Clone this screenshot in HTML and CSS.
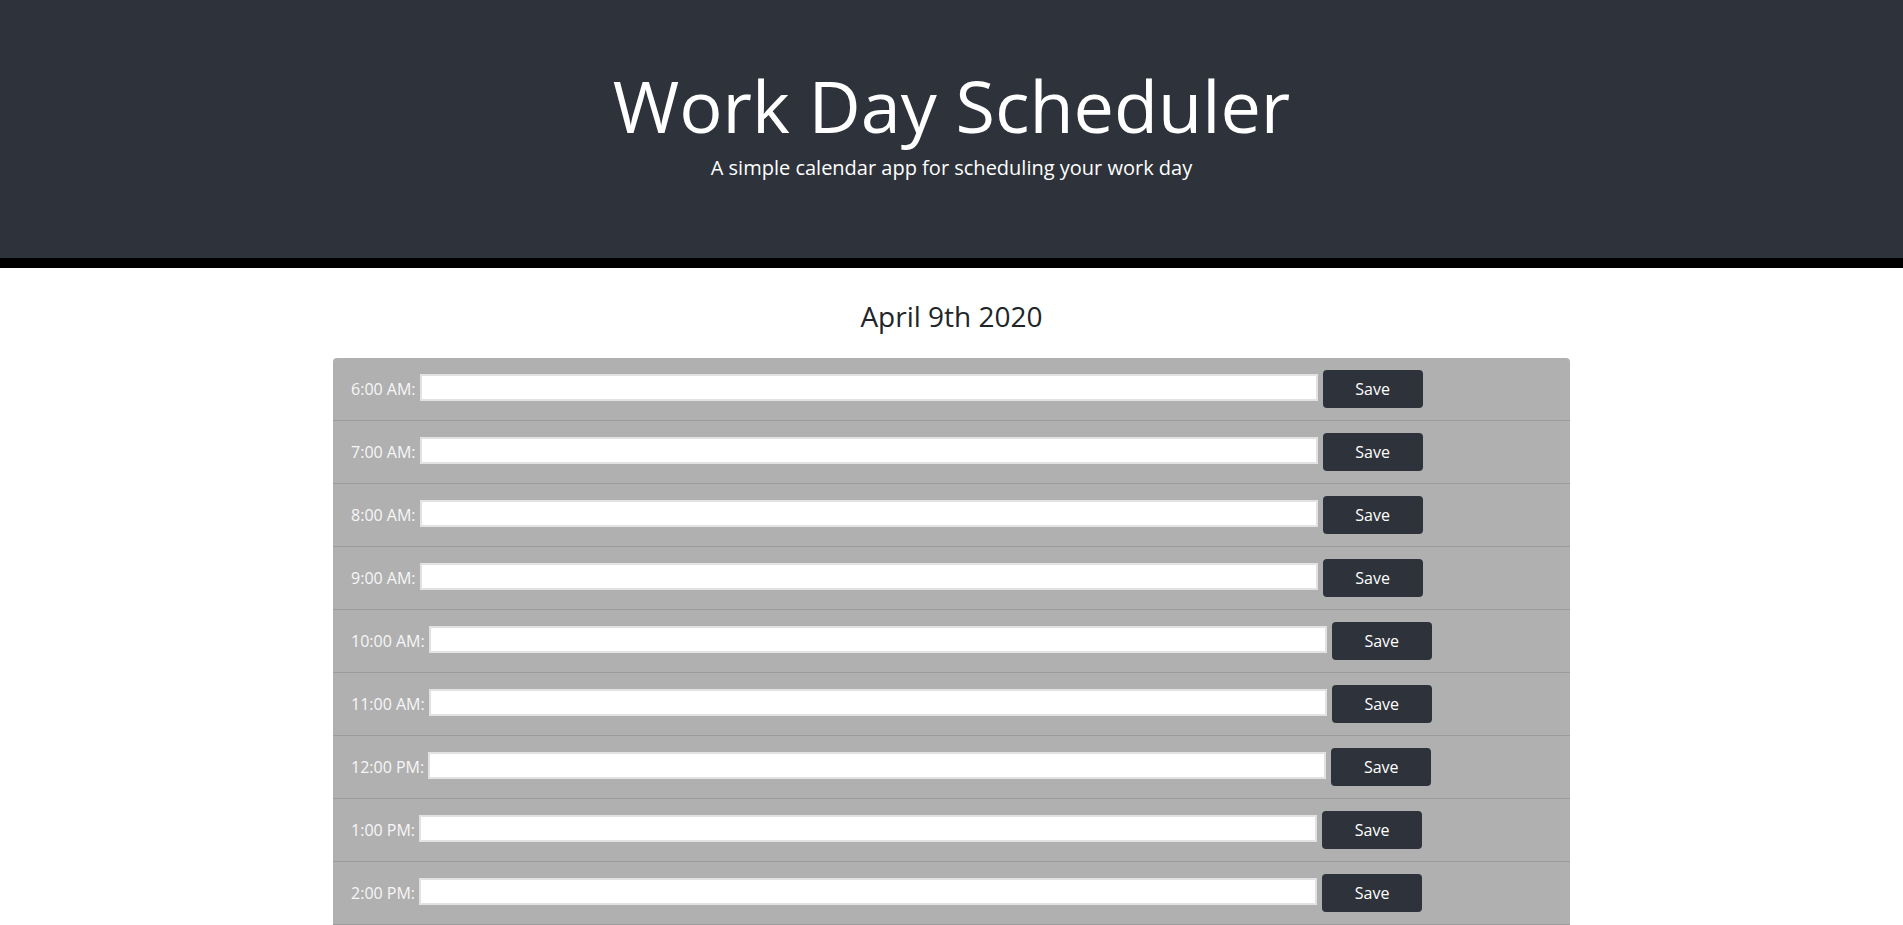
FILE: index.html
```html
<!DOCTYPE html>
<html lang="en">
<head>
<meta charset="utf-8">
<title>Work Day Scheduler</title>
<link rel="stylesheet" href="styles.css">
</head>
<body>
<header class="jumbotron">
  <h1 class="title">Work Day Scheduler</h1>
  <p class="lead">A simple calendar app for scheduling your work day</p>
</header>
<main class="main">
  <p class="current-day">April 9th 2020</p>
  <div class="schedule">
    <div class="row"><label class="hour">6:00 AM:</label><input class="task" type="text"><button class="save">Save</button></div>
    <div class="row"><label class="hour">7:00 AM:</label><input class="task" type="text"><button class="save">Save</button></div>
    <div class="row"><label class="hour">8:00 AM:</label><input class="task" type="text"><button class="save">Save</button></div>
    <div class="row"><label class="hour">9:00 AM:</label><input class="task" type="text"><button class="save">Save</button></div>
    <div class="row"><label class="hour">10:00 AM:</label><input class="task" type="text"><button class="save">Save</button></div>
    <div class="row"><label class="hour">11:00 AM:</label><input class="task" type="text"><button class="save">Save</button></div>
    <div class="row"><label class="hour">12:00 PM:</label><input class="task" type="text"><button class="save">Save</button></div>
    <div class="row"><label class="hour">1:00 PM:</label><input class="task" type="text"><button class="save">Save</button></div>
    <div class="row"><label class="hour">2:00 PM:</label><input class="task" type="text"><button class="save">Save</button></div>
    <div class="row"><label class="hour">3:00 PM:</label><input class="task" type="text"><button class="save">Save</button></div>
    <div class="row"><label class="hour">4:00 PM:</label><input class="task" type="text"><button class="save">Save</button></div>
    <div class="row"><label class="hour">5:00 PM:</label><input class="task" type="text"><button class="save">Save</button></div>
  </div>
</main>
</body>
</html>
```

FILE: styles.css
```css
* {
  box-sizing: border-box;
}

body {
  margin: 0;
  font-family: "Open Sans", "Noto Sans", sans-serif;
  font-size: 16px;
  line-height: 1.5;
  color: #212529;
  background: #ffffff;
}

.jumbotron {
  background: #2e323a;
  color: #ffffff;
  text-align: center;
  padding: 62px 32px 75px;
  border-bottom: 10px solid #000000;
}

.title {
  margin: 0 0 5px;
  font-size: 72px;
  font-weight: 400;
  line-height: 1.2;
}

.lead {
  margin: 0;
  font-size: 20px;
  font-weight: 400;
  line-height: 1.5;
}

.main {
  padding-bottom: 40px;
}

.current-day {
  margin: 27px 0 21px;
  text-align: center;
  font-size: 28px;
  line-height: 1.5;
  color: #212529;
}

.schedule {
  width: 65%;
  margin: 0 auto;
  background: #b0b0b0;
  border-radius: 4px;
  overflow: hidden;
}

.row {
  display: flex;
  align-items: center;
  gap: 4px;
  padding: 12px 18px;
  height: 63px;
  border-bottom: 1px solid #9c9c9c;
}

.hour {
  color: #f7f7f7;
  font-size: 16px;
  white-space: nowrap;
}

.task {
  width: 898px;
  height: 27px;
  margin: -4px 0 0;
  border: 2px solid #e2e2e2;
  background: #ffffff;
  font-family: inherit;
  font-size: 16px;
  padding: 0 4px;
}

.save {
  width: 100px;
  height: 38px;
  margin-left: 1px;
  border: none;
  border-radius: 4px;
  background: #2e323a;
  color: #ffffff;
  font-family: inherit;
  font-size: 16px;
  line-height: 1.5;
  cursor: pointer;
}
```
